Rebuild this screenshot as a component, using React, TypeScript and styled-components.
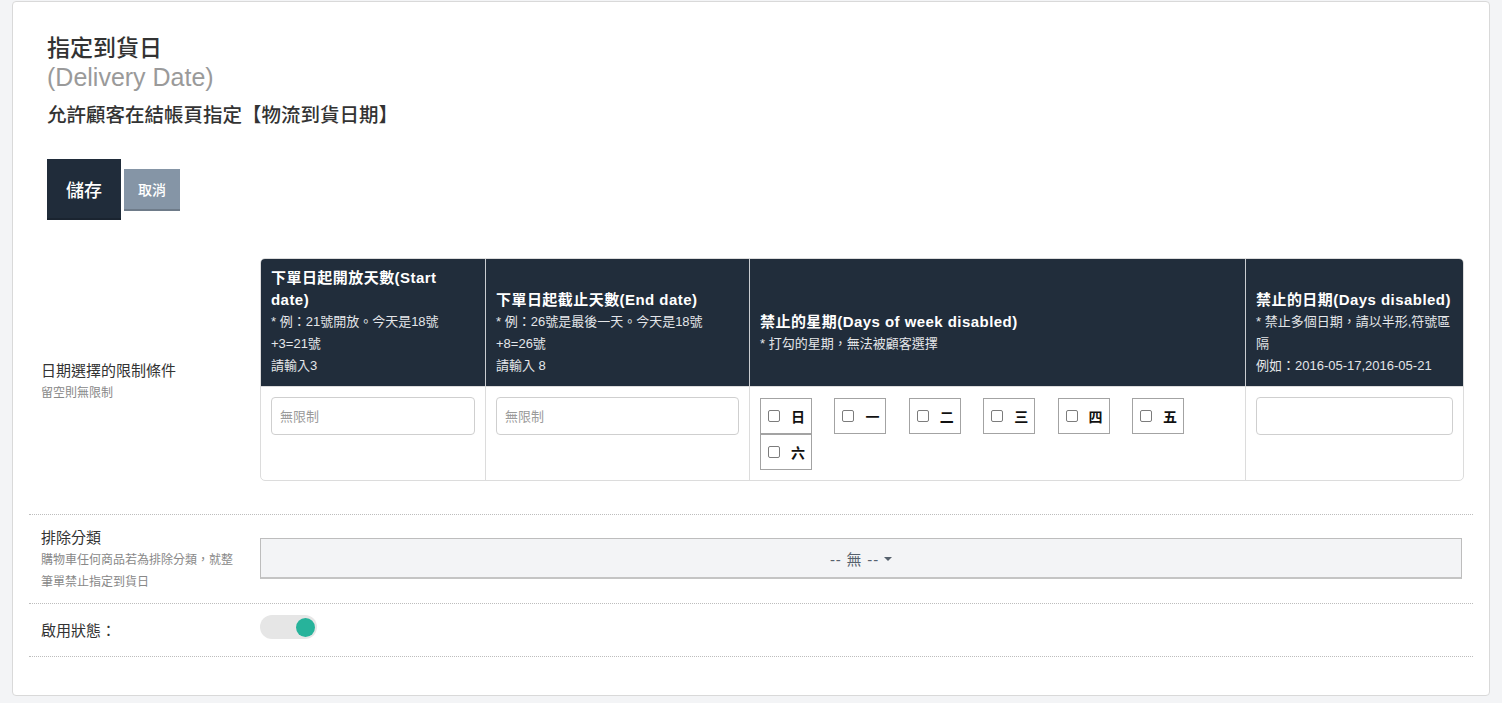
import { createGlobalStyle, styled } from "styled-components";

const GlobalStyle = createGlobalStyle`
  * {
    box-sizing: border-box;
  }
  body {
    margin: 0;
    background-color: #f3f4f6;
    font-family: "Liberation Sans", "Noto Sans CJK TC", sans-serif;
    color: #333;
  }
`;

const Page = styled.div`
  padding: 1px 12px 8px;
`;

const Card = styled.div`
  background-color: #fff;
  border: 1px solid #d9d9d9;
  border-radius: 4px;
  padding: 16px;
`;

const Header = styled.div`
  padding: 15px 18px 0;
`;

const Title = styled.h1`
  margin: 0;
  font-size: 23px;
  line-height: 30px;
  font-weight: 500;
  color: #333;
`;

const EnglishTitle = styled.div`
  font-size: 25px;
  line-height: 28px;
  color: #9a9a9a;
`;

const Subtitle = styled.h2`
  margin: 11px 0 0;
  font-size: 19.5px;
  line-height: 26px;
  font-weight: 500;
  color: #333;
`;

const Actions = styled.div`
  display: flex;
  align-items: center;
  gap: 3px;
  margin-top: 31px;
`;

const Button = styled.button<{ $primary?: boolean }>`
  border: none;
  cursor: pointer;
  color: #fff;
  font-family: inherit;
  font-weight: 500;
  background-color: ${(p) => (p.$primary ? "#202c3a" : "#8595a6")};
  border-bottom: 2px solid ${(p) => (p.$primary ? "#1a2430" : "#6e7b89")};
  font-size: ${(p) => (p.$primary ? "18px" : "14px")};
  height: ${(p) => (p.$primary ? "61px" : "42px")};
  padding: ${(p) => (p.$primary ? "0 19px" : "0 14px")};
`;

const Form = styled.div`
  margin: 18px 0 22px;
`;

const Row = styled.div<{ $center?: boolean; $pad: string }>`
  display: flex;
  align-items: ${(p) => (p.$center ? "center" : "flex-start")};
  padding: ${(p) => p.$pad};
  border-bottom: 1px dotted #bdbdbd;
`;

const LabelCol = styled.div<{ $offset?: number }>`
  flex: none;
  width: 219px;
  padding: 0 13px 0 12px;
  margin-top: ${(p) => p.$offset ?? 0}px;
`;

const LabelTitle = styled.div`
  font-size: 15px;
  line-height: 22px;
  color: #333;
`;

const LabelHint = styled.div`
  font-size: 12px;
  line-height: 22px;
  color: #888;
`;

const FieldCol = styled.div<{ $offset?: number }>`
  flex: 1;
  min-width: 0;
  padding: 0 11px 0 12px;
  margin-top: ${(p) => p.$offset ?? 0}px;
`;

const Table = styled.table`
  width: 100%;
  table-layout: fixed;
  border-collapse: separate;
  border-spacing: 0;
  border: 1px solid #dcdcdc;
  border-radius: 5px;
  overflow: hidden;
`;

const Th = styled.th`
  background-color: #212d3b;
  color: #fff;
  text-align: left;
  vertical-align: bottom;
  padding: 8px 10px 9px;
  font-weight: 400;
  & + & {
    border-left: 1px solid #c9ccd0;
  }
`;

const ThTitle = styled.div`
  font-size: 15px;
  line-height: 22px;
  font-weight: 700;
  letter-spacing: 0.45px;
`;

const ThNote = styled.div`
  font-size: 13px;
  line-height: 22px;
  color: #e4e6e9;
  min-height: 22px;
  white-space: nowrap;
`;

const Td = styled.td`
  vertical-align: top;
  padding: 10px;
  border-top: 1px solid #dcdcdc;
  & + & {
    border-left: 1px solid #dcdcdc;
  }
`;

const TextInput = styled.input`
  display: block;
  width: 100%;
  height: 38px;
  border: 1px solid #cfcfcf;
  border-radius: 4px;
  padding: 0 8px;
  font-size: 13px;
  font-family: inherit;
  color: #333;
  &::placeholder {
    color: #9a9a9a;
  }
`;

const DayList = styled.div`
  display: flex;
  flex-wrap: wrap;
  column-gap: 22.4px;
  padding-top: 1px;
`;

const DayBox = styled.label`
  display: inline-flex;
  align-items: center;
  gap: 11px;
  width: 52px;
  height: 36px;
  padding: 0 6px 0 7px;
  border: 1px solid #a3a3a3;
  font-size: 14px;
  font-weight: 700;
  color: #111;
`;

const Check = styled.input`
  appearance: none;
  margin: 0;
  width: 12px;
  height: 12px;
  border: 1px solid #7c7c7c;
  border-radius: 2px;
  background: #fff;
  flex: none;
`;

const SelectButton = styled.button`
  width: 100%;
  height: 41px;
  background-color: #f3f4f6;
  border: 1px solid #bdbdbd;
  border-bottom: 2px solid #c4c4c4;
  font-family: inherit;
  font-size: 15px;
  letter-spacing: 0.8px;
  color: #56616d;
  display: flex;
  align-items: center;
  justify-content: center;
  gap: 5px;
  cursor: pointer;
`;

const Caret = styled.span`
  display: inline-block;
  width: 0;
  height: 0;
  border-left: 4px solid transparent;
  border-right: 4px solid transparent;
  border-top: 4px solid #56616d;
  margin-top: 2px;
`;

const Toggle = styled.div<{ $on: boolean }>`
  width: 57px;
  height: 24px;
  border-radius: 12px;
  background-color: #e6e6e6;
  display: flex;
  align-items: center;
  justify-content: ${(p) => (p.$on ? "flex-end" : "flex-start")};
  padding: 0 2px;
  span {
    width: 19px;
    height: 19px;
    border-radius: 50%;
    background-color: #27b39b;
  }
`;

const days = ["日", "一", "二", "三", "四", "五", "六"];

const App = () => {
  return (
    <Page>
      <GlobalStyle />
      <Card>
        <Header>
          <Title>指定到貨日</Title>
          <EnglishTitle>(Delivery Date)</EnglishTitle>
          <Subtitle>允許顧客在結帳頁指定【物流到貨日期】</Subtitle>
          <Actions>
            <Button $primary>儲存</Button>
            <Button>取消</Button>
          </Actions>
        </Header>

        <Form>
          <Row $center $pad="20px 0 33px">
            <LabelCol $offset={24}>
              <LabelTitle>日期選擇的限制條件</LabelTitle>
              <LabelHint>留空則無限制</LabelHint>
            </LabelCol>
            <FieldCol>
              <Table>
                <colgroup>
                  <col style={{ width: 224 }} />
                  <col style={{ width: 264 }} />
                  <col style={{ width: 496 }} />
                  <col style={{ width: 218 }} />
                </colgroup>
                <thead>
                  <tr>
                    <Th>
                      <ThTitle>
                        下單日起開放天數(Start
                        <br />
                        date)
                      </ThTitle>
                      <ThNote>* 例：21號開放。今天是18號</ThNote>
                      <ThNote>+3=21號</ThNote>
                      <ThNote>請輸入3</ThNote>
                    </Th>
                    <Th>
                      <ThTitle>下單日起截止天數(End date)</ThTitle>
                      <ThNote>* 例：26號是最後一天。今天是18號</ThNote>
                      <ThNote>+8=26號</ThNote>
                      <ThNote>請輸入 8</ThNote>
                    </Th>
                    <Th>
                      <ThTitle>禁止的星期(Days of week disabled)</ThTitle>
                      <ThNote>* 打勾的星期，無法被顧客選擇</ThNote>
                      <ThNote />
                    </Th>
                    <Th>
                      <ThTitle>禁止的日期(Days disabled)</ThTitle>
                      <ThNote>* 禁止多個日期，請以半形,符號區</ThNote>
                      <ThNote>隔</ThNote>
                      <ThNote>例如：2016-05-17,2016-05-21</ThNote>
                    </Th>
                  </tr>
                </thead>
                <tbody>
                  <tr>
                    <Td>
                      <TextInput placeholder="無限制" />
                    </Td>
                    <Td>
                      <TextInput placeholder="無限制" />
                    </Td>
                    <Td>
                      <DayList>
                        {days.map((d) => (
                          <DayBox key={d}>
                            <Check type="checkbox" />
                            {d}
                          </DayBox>
                        ))}
                      </DayList>
                    </Td>
                    <Td>
                      <TextInput />
                    </Td>
                  </tr>
                </tbody>
              </Table>
            </FieldCol>
          </Row>

          <Row $pad="12px 0 10px">
            <LabelCol>
              <LabelTitle>排除分類</LabelTitle>
              <LabelHint>購物車任何商品若為排除分類，就整筆單禁止指定到貨日</LabelHint>
            </LabelCol>
            <FieldCol $offset={11}>
              <SelectButton>
                -- 無 --
                <Caret />
              </SelectButton>
            </FieldCol>
          </Row>

          <Row $pad="16px 0 14px">
            <LabelCol>
              <LabelTitle>啟用狀態：</LabelTitle>
            </LabelCol>
            <FieldCol $offset={-5}>
              <Toggle $on>
                <span />
              </Toggle>
            </FieldCol>
          </Row>
        </Form>
      </Card>
    </Page>
  );
};

export default App;
